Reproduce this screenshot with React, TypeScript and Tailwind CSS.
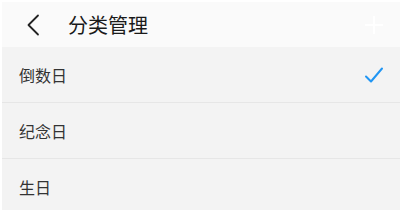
import React from "react";

const font = { fontFamily: '"Noto Sans CJK SC", "Noto Sans", sans-serif' };

function Row({ label, checked, last }: { label: string; checked?: boolean; last?: boolean }) {
  return (
    <div
      className={`flex h-[56px] items-center justify-between bg-[#f3f3f3] pl-[17px] pr-[16px] ${
        last ? "" : "border-b border-[#e6e6e6]"
      }`}
    >
      <span className="text-[16px] leading-none text-[#333333]">{label}</span>
      {checked && (
        <svg width="20" height="20" viewBox="0 0 20 20" fill="none">
          <path d="M2 11.5 L7 16.5 L18 3.5" stroke="#2196f3" strokeWidth="2" strokeLinecap="round" strokeLinejoin="round" />
        </svg>
      )}
    </div>
  );
}

export default function App() {
  return (
    <div className="h-[210px] w-[400px] overflow-hidden border-l-2 border-t-2 border-white bg-[#f3f3f3]" style={font}>
      <div className="flex h-[45px] items-center bg-[#fafafa] pl-[24px] pr-[16px]">
        <svg width="14" height="22" viewBox="0 0 14 22" fill="none">
          <path d="M12 1.5 L2.5 11 L12 20.5" stroke="#222222" strokeWidth="1.8" strokeLinecap="round" strokeLinejoin="round" />
        </svg>
        <span className="ml-[28px] text-[20px] font-normal leading-none text-[#1a1a1a]">分类管理</span>
        <div className="ml-auto">
          <svg width="20" height="20" viewBox="0 0 20 20" fill="none">
            <path d="M10 1 V19 M1 10 H19" stroke="#ffffff" strokeWidth="2" />
          </svg>
        </div>
      </div>
      <Row label="倒数日" checked />
      <Row label="纪念日" />
      <Row label="生日" last />
    </div>
  );
}
